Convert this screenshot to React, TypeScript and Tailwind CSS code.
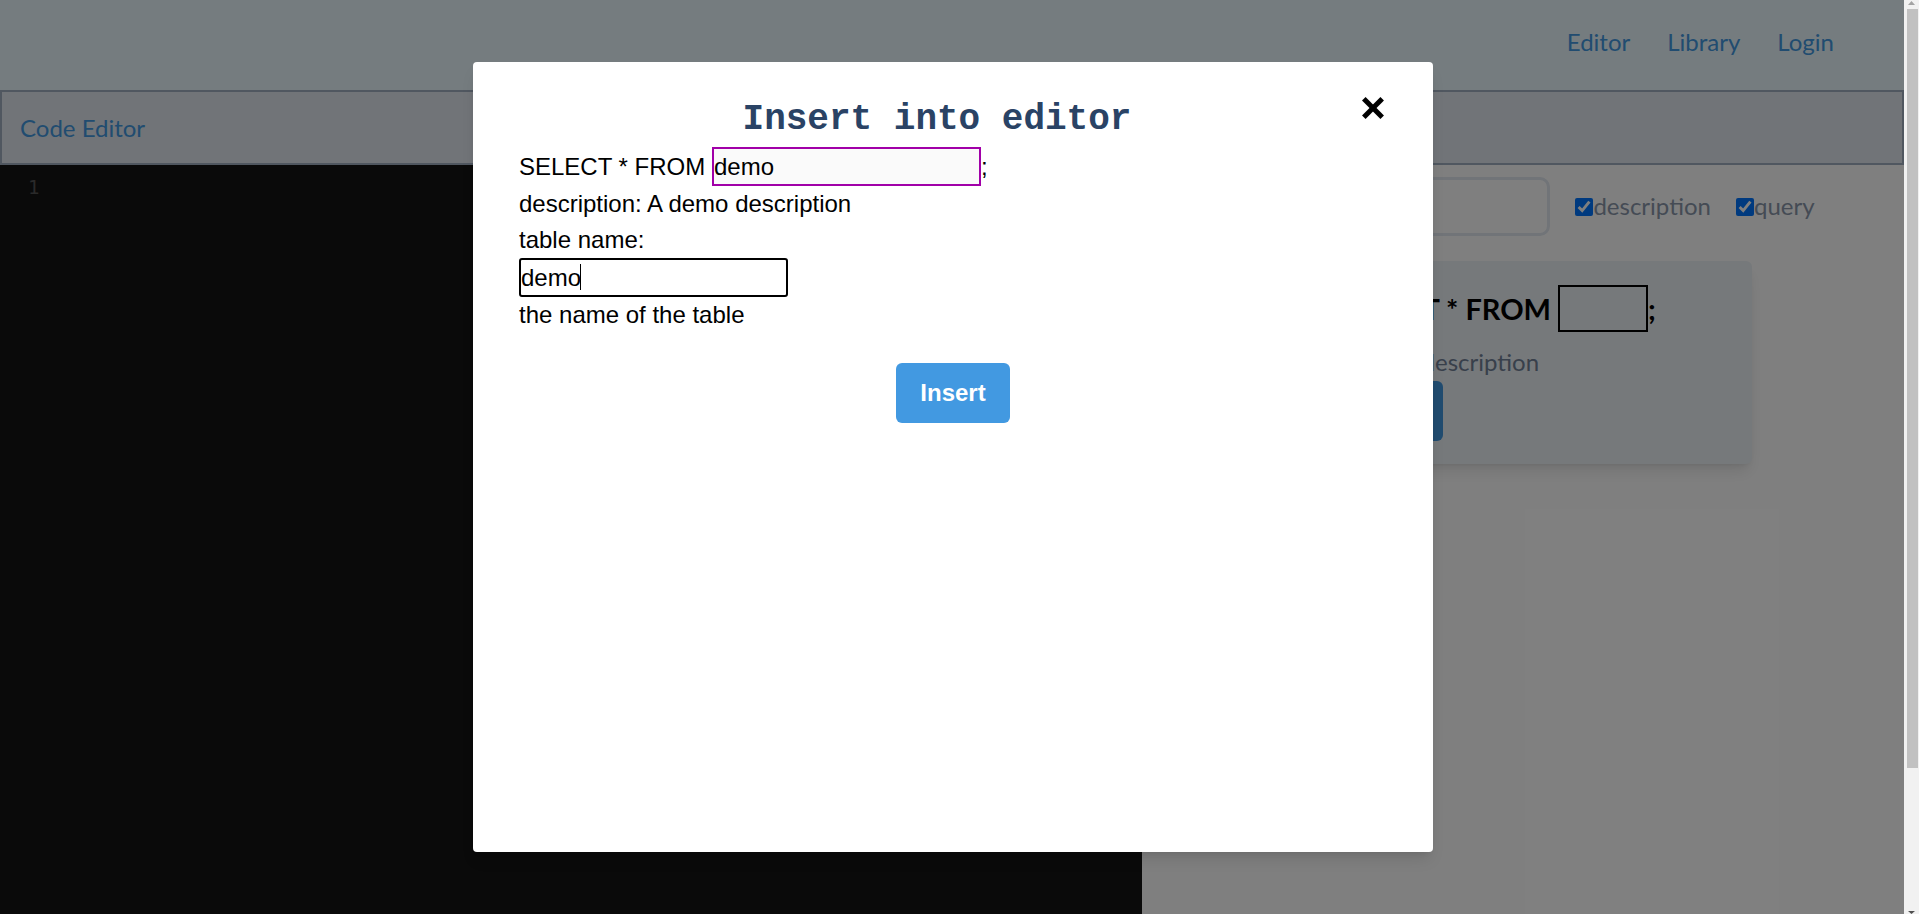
import React from "react";

function CloseIcon() {
  return (
    <svg width="22" height="22" viewBox="0 0 22 22" className="block">
      <line x1="1.8" y1="1.8" x2="20.2" y2="20.2" stroke="black" strokeWidth="5" strokeLinecap="butt" />
      <line x1="20.2" y1="1.8" x2="1.8" y2="20.2" stroke="black" strokeWidth="5" strokeLinecap="butt" />
    </svg>
  );
}

function Scrollbar() {
  return (
    <div className="w-[15px] h-full bg-[#f1f1f1] flex flex-col">
      <svg width="15" height="5" viewBox="0 0 15 5" className="block shrink-0">
        <polygon points="4,5 11,5 7.5,1" fill="#a3a3a3" />
      </svg>
      <div className="mt-[4px] ml-[3px] w-[11px] h-[759px] bg-[#c1c1c1]"></div>
      <div className="flex-1"></div>
      <svg width="15" height="4" viewBox="0 0 15 4" className="block shrink-0">
        <polygon points="4,1 11,1 7.5,4" fill="#505050" />
      </svg>
    </div>
  );
}

export default function App() {
  return (
    <div className="flex h-[914px] overflow-hidden font-['Lato',sans-serif]">
      <div className="relative flex-1 min-w-0 flex flex-col bg-white">
        <header className="h-[90px] shrink-0 bg-[#ebf8ff] flex justify-end items-start pt-[28px] pr-[70px] gap-[37px] text-[24px] leading-[28.8px] text-[#4299e1]">
          <a>Editor</a>
          <a>Library</a>
          <a>Login</a>
        </header>

        <div className="h-[75px] shrink-0 border-2 border-[#a0aec0] bg-[#e2e8f0] pl-[18px] pt-[22px] text-[24px] leading-[28.8px] text-[#4299e1]">
          Code Editor
        </div>

        <main className="flex flex-1">
          <div className="w-[60%] bg-[#141414]">
            <div className="pl-[28px] pt-[11px] font-['DejaVu_Sans_Mono',monospace] text-[19px] leading-[22px] text-[#555555]">
              1
            </div>
          </div>
          <div className="w-[40%] bg-white pl-[24px] pt-[12px]">
            <div className="flex items-center h-[59px]">
              <input
                className="w-[384px] h-[59px] border-[3px] border-[#e2e8f0] rounded-[10px] bg-white outline-none"
                readOnly
              />
              <input type="checkbox" defaultChecked className="ml-[25px] w-[18px] h-[18px] m-0" />
              <span className="text-[24px] leading-[28.8px] text-[#8a97aa]">description</span>
              <input type="checkbox" defaultChecked className="ml-[25px] w-[18px] h-[18px] m-0" />
              <span className="text-[24px] leading-[28.8px] text-[#8a97aa]">query</span>
            </div>

            <div className="mt-[25px] w-[586px] rounded-md bg-[#edf2f7] shadow-lg pt-[24px] pb-[23px] pl-[173px]">
              <div className="flex items-center h-[47px] font-bold text-[29px] text-black">
                <span className="whitespace-pre">SELECT * FROM </span>
                <span className="block w-[90px] h-[47px] border-2 border-black"></span>
                <span>;</span>
              </div>
              <div className="mt-[16px] -ml-[5px] text-[24px] leading-[28.8px] text-[#718096]">A demo description</div>
              <button className="mt-[4px] h-[60px] w-[104px] rounded-md bg-[#4299e1] text-white text-[24px] font-bold">
                Insert
              </button>
            </div>
          </div>
        </main>

        <div className="absolute inset-0 bg-black/50 flex items-center justify-center pl-[2px]">
          <div className="w-[960px] h-[790px] bg-white rounded-[4px] shadow-lg px-[46px] pt-[37px] font-['Liberation_Sans',Arial,sans-serif] text-[24px] leading-[36px] text-black">
            <div className="flex items-start">
              <h2 className="flex-1 text-center font-['Liberation_Mono',monospace] font-bold text-[36px] leading-[41px] text-[#2a4365]">
                Insert into editor
              </h2>
              <button className="w-[32px] flex justify-end -mt-[2px]">
                <span className="mr-[3px]">
                  <CloseIcon />
                </span>
              </button>
            </div>

            <div className="mt-[7px] flex items-center h-[39px]">
              <span className="whitespace-pre">SELECT * FROM </span>
              <input
                defaultValue="demo"
                readOnly
                className="w-[269px] h-[39px] border-2 border-[#a100a8] bg-[#fafafa] px-0 text-[24px] outline-none font-['Liberation_Sans',Arial,sans-serif]"
              />
              <span>;</span>
            </div>
            <div>description: A demo description</div>
            <div>table name:</div>
            <div className="relative w-[269px] h-[39px]">
              <input
                defaultValue="demo"
                readOnly
                className="w-[269px] h-[39px] border-2 border-black rounded-[3px] bg-white px-0 text-[24px] outline-none caret-transparent font-['Liberation_Sans',Arial,sans-serif]"
              />
              <span className="absolute left-[61px] top-[6px] w-[1px] h-[26px] bg-black"></span>
            </div>
            <div>the name of the table</div>

            <button className="mt-[30px] mx-auto block px-6 py-3 leading-[36px] rounded-[6px] bg-[#4299e1] font-bold text-white text-[24px]">
              Insert
            </button>
          </div>
        </div>
      </div>
      <Scrollbar />
    </div>
  );
}
